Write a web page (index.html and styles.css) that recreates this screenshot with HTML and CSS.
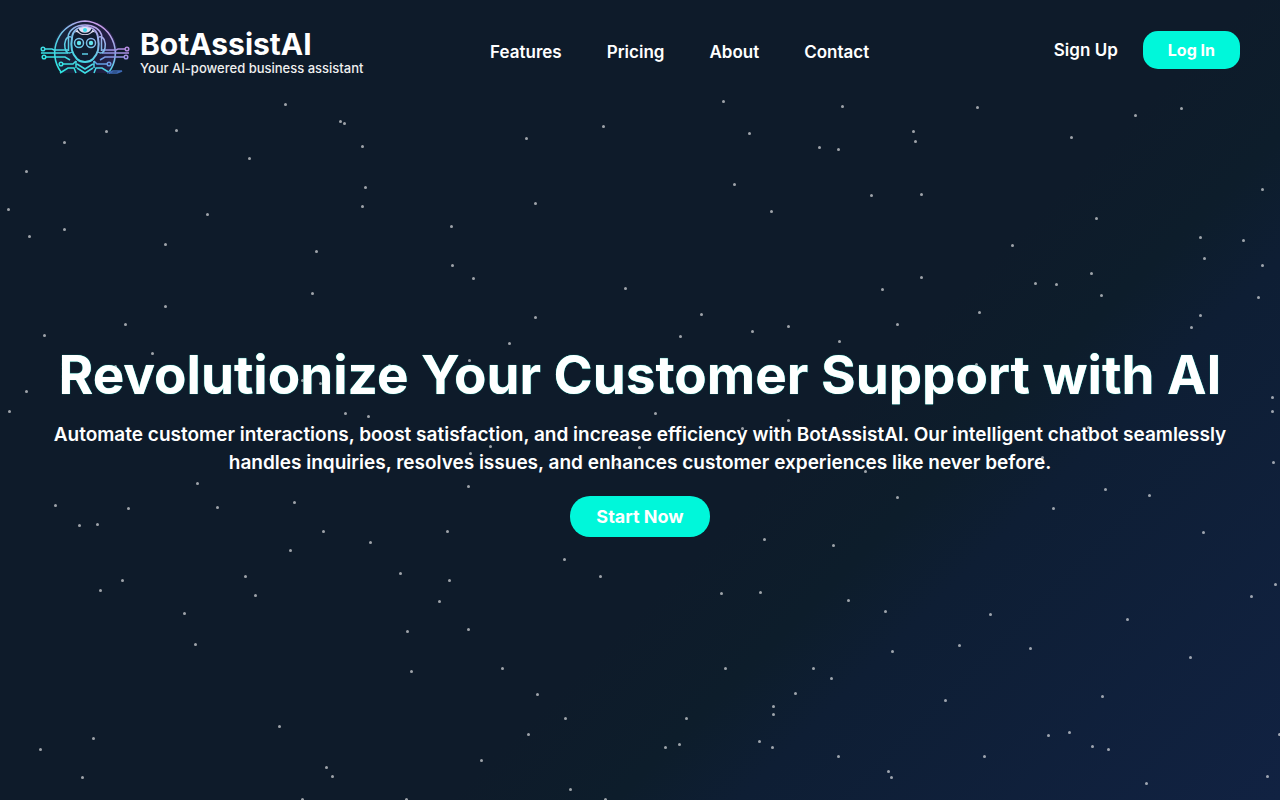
FILE: index.html
```
<!DOCTYPE html>
<html lang="en">
<head>
    <meta charset="UTF-8">
    <meta name="viewport" content="width=device-width, initial-scale=1.0">
    <title>BotAssistAI</title>
    <link rel="stylesheet" href="styles.css">
</head>
<body>

<svg class="stars" id="stars" viewBox="0 0 1280 800" preserveAspectRatio="xMidYMid slice" aria-hidden="true"></svg>

<header class="header">
    <a href="#" class="brand">
        <svg class="logo" viewBox="0 3 90 60" fill="none" stroke="url(#logoStroke)" stroke-width="1.5" aria-hidden="true">
            <defs>
                <linearGradient id="logoStroke" gradientUnits="userSpaceOnUse" x1="32" y1="58" x2="60" y2="6">
                    <stop offset="0" stop-color="#2fe6e2"/>
                    <stop offset="0.35" stop-color="#4fd3e6"/>
                    <stop offset="0.7" stop-color="#8fb6ea"/>
                    <stop offset="1" stop-color="#cf9ae8"/>
                </linearGradient>
                <linearGradient id="logoRight" gradientUnits="userSpaceOnUse" x1="62" y1="56" x2="78" y2="28">
                    <stop offset="0" stop-color="#46a6e8"/>
                    <stop offset="1" stop-color="#b48be0"/>
                </linearGradient>
                <linearGradient id="logoFill" x1="0" y1="0" x2="1" y2="0">
                    <stop offset="0" stop-color="#17283f"/>
                    <stop offset="0.6" stop-color="#171a36"/>
                    <stop offset="1" stop-color="#2b2450"/>
                </linearGradient>
            </defs>
            <!-- dome -->
            <path d="M21 56A32 32 0 1 1 69 56Z" fill="url(#logoFill)" stroke="none"/>
            <path d="M21 55A32 32 0 0 1 45 4A32 32 0 0 1 69 55"/>
            <!-- circuit lines -->
            <path d="M5 32H12L14 33H28M1 36H28M6 40H25L30 43"/>
            <path d="M85 32H78L76 33H62M89 36H62M84 40H65L60 43" stroke="url(#logoRight)"/>
            <path d="M23 47H33L36 44"/>
            <path d="M67 47H57L54 44" stroke="url(#logoRight)"/>
            <circle cx="3" cy="32" r="1.8"/>
            <circle cx="4" cy="40" r="1.8"/>
            <circle cx="87" cy="32" r="1.8" stroke="url(#logoRight)"/>
            <circle cx="86" cy="40" r="1.8" stroke="url(#logoRight)"/>
            <circle cx="21" cy="47" r="1.8"/>
            <circle cx="69" cy="47" r="1.8" stroke="url(#logoRight)"/>
            <!-- shoulders -->
            <path d="M20 56L28 51H34L36 56M70 56L62 51H56L54 56M36 44V51M54 44V51M37 47L45 52L53 47M37 51L45 56L53 51"/>
            <path d="M67 56L73 54H82L77 56H69" stroke="#3d69b4"/>
            <!-- head -->
            <path d="M32 21C33 6 57 6 58 21C60 31 57 38 53 42C49 46 41 46 37 42C33 38 30 31 32 21Z" fill="#101c30" stroke-width="2"/>
            <path d="M31 20C26 18 24 26 25 31C26 36 29 37 32 35M59 20C64 18 66 26 65 31C64 36 61 37 58 35M28.500 20V34M61.500 20V34M28 20C30 4 60 4 62 20"/>
            <path d="M35 16C37 13 39 18 43 18H47C51 18 53 13 55 16C52 8 38 8 35 16Z" fill="#e2e0f4" stroke="none"/>
            <path d="M38 12C40 18 50 18 52 12" stroke="#132138"/>
            <circle cx="45" cy="13" r="2" fill="#35d7ea" stroke="none"/>
            <circle cx="39" cy="26" r="4.500"/>
            <circle cx="51" cy="26" r="4.500"/>
            <circle cx="39" cy="26" r="2.200" fill="#63e4ed" stroke="none"/>
            <circle cx="51" cy="26" r="2.200" fill="#63e4ed" stroke="none"/>
            <path d="M42 37H48"/>
        </svg>
        <span class="brand-text">
            <span class="brand-name">BotAssistAI</span>
            <span class="brand-tagline">Your AI-powered business assistant</span>
        </span>
    </a>

    <nav class="nav">
        <a href="#features">Features</a>
        <a href="#pricing">Pricing</a>
        <a href="#about">About</a>
        <a href="#contact">Contact</a>
    </nav>

    <div class="account">
        <a href="#signup" class="signup">Sign Up</a>
        <button type="button" class="btn login">Log In</button>
    </div>
</header>

<main class="hero">
    <h1>Revolutionize Your Customer Support with AI</h1>
    <p>Automate customer interactions, boost satisfaction, and increase efficiency with BotAssistAI. Our intelligent chatbot seamlessly handles inquiries, resolves issues, and enhances customer experiences like never before.</p>
    <button type="button" class="btn start">Start Now</button>
</main>

<script src="stars.js"></script>
</body>
</html>
```
FILE: styles.css
```
* {
    box-sizing: border-box;
}

body {
    margin: 0;
    min-height: 100vh;
    display: flex;
    flex-direction: column;
    font-family: Inter, "Liberation Sans", sans-serif;
    color: #fff;
    background: linear-gradient(135deg, #0e1b2a 0%, #0e1b2a 60%, #0d1d2b 68%, #0e1e34 74%, #112242 100%);
}

a {
    color: inherit;
    text-decoration: none;
}

.stars {
    position: absolute;
    top: 0;
    left: 0;
    width: 100%;
    height: 100%;
    z-index: -1;
    fill: #fff;
    fill-opacity: 0.6;
}

.header {
    display: flex;
    align-items: center;
    justify-content: space-between;
    height: 100px;
    padding: 0 40px;
}

.brand {
    display: flex;
    align-items: center;
    gap: 10px;
}

.logo {
    width: 90px;
    height: 60px;
}

.brand-text {
    display: flex;
    flex-direction: column;
    padding-top: 4px;
    white-space: nowrap;
}

.brand-name {
    font-size: 30px;
    font-weight: 700;
    line-height: 32px;
}

.brand-tagline {
    font-size: 13px;
    font-weight: 500;
    line-height: 16px;
    color: #f0f0f0;
}

.nav {
    display: flex;
    gap: 45px;
    padding: 4px 58px 0 0;
    font-size: 17px;
    font-weight: 600;
}

.account {
    display: flex;
    align-items: center;
    gap: 25px;
}

.signup {
    font-size: 17px;
    font-weight: 600;
}

.btn {
    border: none;
    color: #fff;
    background: #00f7da;
    font-family: inherit;
    font-weight: 700;
    cursor: pointer;
}

.login {
    height: 38px;
    padding: 0 25px;
    border-radius: 15px;
    font-size: 16px;
}

.hero {
    flex: 1;
    display: flex;
    flex-direction: column;
    align-items: center;
    justify-content: center;
    padding: 0 40px 24px;
    text-align: center;
}

.hero h1 {
    margin: 0 0 11px;
    font-size: 53px;
    font-weight: 700;
    line-height: 70px;
    text-shadow: 0 0 1px #00f7da;
}

.hero p {
    margin: 0 0 19px;
    font-size: 19px;
    font-weight: 600;
    line-height: 28px;
}

.start {
    height: 41px;
    padding: 0 26px;
    border-radius: 20px;
    font-size: 18px;
}
```
FILE: stars.js
```
const points = [
    [285, 104], [340, 121], [344, 123], [106, 131], [176, 130], [64, 142], [249, 158], [362, 146], [26, 171], [365, 187],
    [8, 209], [207, 214], [362, 206], [64, 229], [29, 236], [165, 244], [316, 251], [312, 293], [165, 306], [125, 324],
    [44, 335], [723, 101], [842, 106], [977, 107], [1181, 108], [1135, 115], [603, 126], [526, 138], [749, 133], [819, 147],
    [838, 149], [913, 131], [915, 141], [1071, 137], [734, 184], [771, 211], [871, 195], [921, 194], [1096, 218], [1262, 189],
    [535, 203], [451, 226], [452, 265], [473, 278], [625, 288], [535, 317], [701, 314], [752, 331], [680, 336], [788, 326],
    [839, 341], [882, 289], [921, 277], [897, 324], [979, 312], [1012, 245], [1035, 283], [1056, 284], [1091, 273], [1101, 295],
    [1200, 237], [1204, 258], [1243, 240], [1262, 265], [1258, 297], [1200, 315], [1191, 327], [509, 343], [152, 353], [469, 360],
    [115, 366], [389, 365], [620, 369], [976, 364], [26, 391], [9, 411], [302, 380], [320, 383], [345, 413], [368, 416],
    [655, 413], [788, 420], [742, 428], [1088, 427], [490, 446], [639, 447], [470, 453], [617, 464], [865, 471], [1042, 457],
    [1272, 397], [1272, 411], [1273, 462], [197, 483], [468, 486], [1105, 489], [1149, 495], [897, 497], [55, 505], [128, 508],
    [217, 507], [294, 502], [1053, 508], [79, 525], [97, 524], [323, 531], [447, 531], [290, 550], [370, 542], [764, 539],
    [833, 545], [1203, 532], [564, 559], [600, 576], [400, 573], [449, 580], [245, 576], [122, 580], [100, 590], [255, 595],
    [439, 601], [184, 613], [721, 593], [760, 592], [848, 600], [885, 611], [990, 614], [1275, 584], [1251, 596], [1127, 619],
    [407, 631], [468, 629], [195, 644], [892, 651], [959, 645], [1030, 648], [1190, 657], [411, 671], [502, 668], [725, 668],
    [813, 668], [831, 678], [795, 693], [537, 694], [945, 700], [1102, 696], [565, 718], [686, 718], [773, 706], [773, 714],
    [279, 726], [528, 734], [93, 738], [40, 749], [665, 747], [679, 744], [759, 741], [772, 747], [838, 756], [481, 760],
    [326, 767], [332, 776], [82, 777], [888, 771], [891, 777], [984, 756], [1048, 735], [1069, 732], [1092, 746], [1108, 749],
    [1279, 734], [1267, 776], [1146, 783], [570, 789], [605, 799], [302, 799], [406, 799]
];

const stars = document.getElementById("stars");

points.forEach(([x, y]) => {
    const star = document.createElementNS("http://www.w3.org/2000/svg", "circle");
    star.setAttribute("cx", x + 0.5);
    star.setAttribute("cy", y + 0.5);
    star.setAttribute("r", 1.5);
    stars.appendChild(star);
});
```
